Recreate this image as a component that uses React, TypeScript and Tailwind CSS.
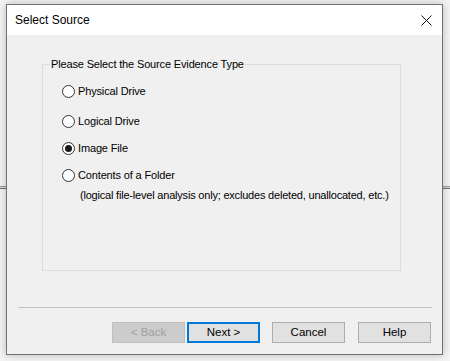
import { ReactNode } from "react";

function Radio({ checked, children }: { checked?: boolean; children: ReactNode }) {
  return (
    <div className="flex items-center h-[13px] gap-[3px]">
      <span className="flex items-center justify-center w-[13px] h-[13px] rounded-full border border-[#333333] bg-white shrink-0">
        {checked && <span className="w-[7px] h-[7px] rounded-full bg-[#1a1a1a]" />}
      </span>
      <span className="leading-[13px]">{children}</span>
    </div>
  );
}

function DialogButton({
  children,
  variant = "normal",
}: {
  children: ReactNode;
  variant?: "normal" | "default" | "disabled";
}) {
  const styles = {
    normal: "border border-[#adadad] bg-[#e1e1e1] text-black",
    default: "border-2 border-[#0078d7] bg-[#e1e1e1] text-black",
    disabled: "border border-[#bfbfbf] bg-[#cccccc] text-[#a0a0a0]",
  };
  return (
    <button
      className={`w-[73px] h-[21px] flex items-center justify-center text-[11.5px] tracking-normal leading-none ${styles[variant]}`}
    >
      {children}
    </button>
  );
}

export default function App() {
  return (
    <div className="relative w-[450px] h-[361px] overflow-hidden bg-[#f4f4f4] pt-[4px] pl-[6px] font-['Liberation_Sans',Arial,sans-serif] text-[11px] tracking-[-0.15px] text-black">
      {/* app behind the dialog */}
      <div className="absolute left-0 right-0 top-[186px] h-[3px] border-t border-b border-t-[#9a9a9a] border-b-[#6e6e6e] bg-[#dcdcdc]" />

      <div className="relative z-10 w-[437px] h-[351px] border border-[#727272] bg-[#f0f0f0] shadow-[0_0_8px_rgba(0,0,0,0.25)] flex flex-col">
        <div className="h-[30px] bg-white flex items-center justify-between pl-[8px] pr-[10px] shrink-0">
          <span className="text-[12px] tracking-normal">Select Source</span>
          <svg width="11" height="11" viewBox="0 0 11 11" className="mt-[1px]">
            <path d="M0.5 0.5 L10.5 10.5 M10.5 0.5 L0.5 10.5" stroke="#111" strokeWidth="1" />
          </svg>
        </div>

        <fieldset className="mt-[23px] ml-[35px] w-[359px] h-[213px] border border-[#dcdcdc]">
          <legend className="ml-[7px] px-[1px] leading-[13px]">
            Please Select the Source Evidence Type
          </legend>
          <div className="flex flex-col mt-[14px] pl-[19px] whitespace-nowrap">
            <Radio>Physical Drive</Radio>
            <div className="mt-[17px]">
              <Radio>Logical Drive</Radio>
            </div>
            <div className="mt-[14px]">
              <Radio checked>Image File</Radio>
            </div>
            <div className="mt-[14px]">
              <Radio>Contents of a Folder</Radio>
            </div>
            <div className="mt-[7px] ml-[18px] leading-[13px] tracking-[-0.2px]">
              (logical file-level analysis only; excludes deleted, unallocated, etc.)
            </div>
          </div>
        </fieldset>

        <div className="mt-[36px] ml-[11px] w-[414px] h-px bg-[#c4c4c4]" />

        <div className="mt-[14px] flex justify-end pr-[11px]">
          <DialogButton variant="disabled">&lt; Back</DialogButton>
          <div className="ml-[2px]">
            <DialogButton variant="default">Next &gt;</DialogButton>
          </div>
          <div className="ml-[12px]">
            <DialogButton>Cancel</DialogButton>
          </div>
          <div className="ml-[13px]">
            <DialogButton>Help</DialogButton>
          </div>
        </div>
      </div>
    </div>
  );
}
